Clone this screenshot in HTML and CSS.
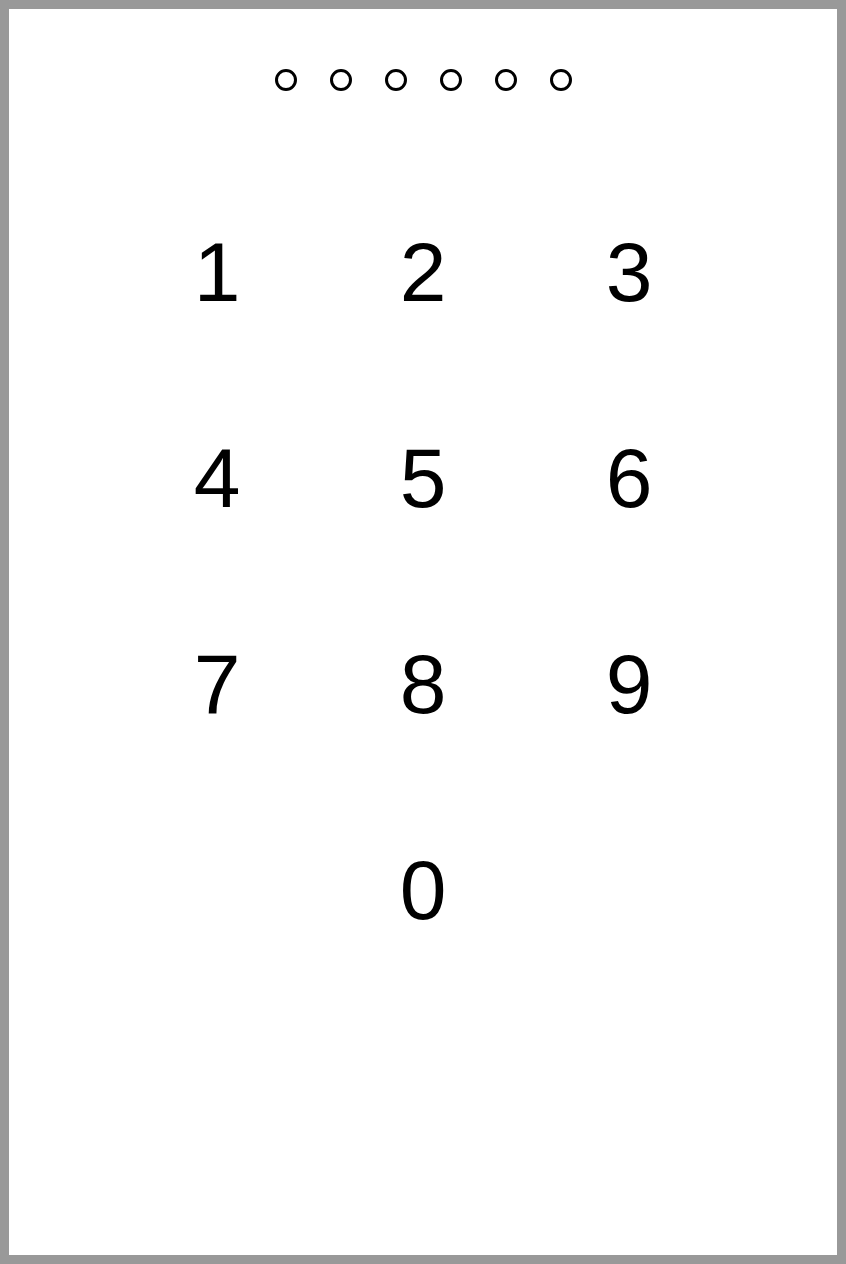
FILE: index.html
```html
<!DOCTYPE html>
<html lang="en">
<head>
    <meta charset="UTF-8">
    <meta name="viewport" content="width=device-width, initial-scale=1.0">
    <title>Passcode</title>
    <link rel="stylesheet" href="styles.css">
</head>
<body>
    <div class="screen">
        <div class="dots">
            <span class="dot"></span>
            <span class="dot"></span>
            <span class="dot"></span>
            <span class="dot"></span>
            <span class="dot"></span>
            <span class="dot"></span>
        </div>

        <div class="keypad">
            <button class="key">1</button>
            <button class="key">2</button>
            <button class="key">3</button>
            <button class="key">4</button>
            <button class="key">5</button>
            <button class="key">6</button>
            <button class="key">7</button>
            <button class="key">8</button>
            <button class="key">9</button>
            <button class="key key-zero">0</button>
        </div>
    </div>
</body>
</html>
```

FILE: styles.css
```css
* {
    box-sizing: border-box;
}
body {
    margin: 0;
    font-family: 'Liberation Sans', Arial, sans-serif;
    background-color: #999;
}
.screen {
    height: 1264px;
    border: 9px solid #999;
    background-color: #fff;
    display: flex;
    flex-direction: column;
    align-items: center;
}
.dots {
    display: flex;
    gap: 33px;
    margin-top: 60px;
}
.dot {
    width: 22px;
    height: 22px;
    border: 3.5px solid #000;
    border-radius: 50%;
}
.keypad {
    display: grid;
    grid-template-columns: repeat(3, 206px);
    grid-auto-rows: 206px;
    margin-top: 78px;
}
.key {
    background: none;
    border: none;
    padding: 0;
    font-family: inherit;
    font-size: 84px;
    line-height: 206px;
    color: #000;
    cursor: pointer;
}
.key-zero {
    grid-column: 2;
}
```
